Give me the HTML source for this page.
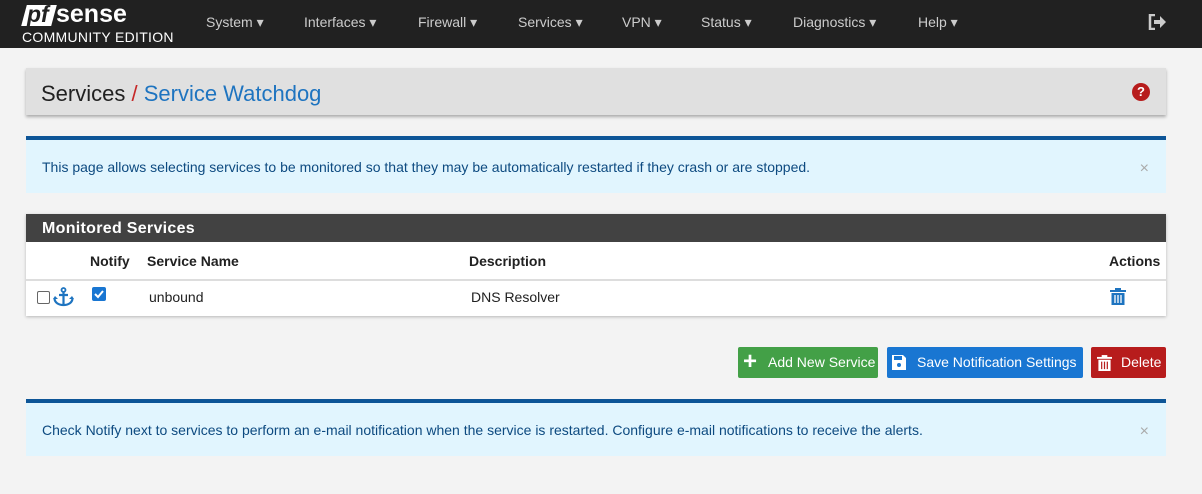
<!DOCTYPE html>
<html><head><style>
body{margin:0;width:1202px;height:494px;background:#f3f3f3;font-family:"Liberation Sans",sans-serif;font-size:14px;color:#212121;position:relative;overflow:hidden}
.nav{position:absolute;left:0;top:0;width:1202px;height:48px;background:#212121}
.nav .m{position:absolute;top:14px;color:#ccc;font-size:14px}
.abs{position:absolute}
.panel{position:absolute;left:26px;width:1140px;background:#fff;box-shadow:0 1px 3px rgba(0,0,0,.25)}
.alert{position:absolute;left:26px;width:1140px;background:#e1f5fe;border-top:4px solid #0d5597;color:#0d4a80;font-size:14px;box-sizing:border-box}
.btn{position:absolute;top:347px;height:31px;color:#fff;font-size:14px;border-radius:2px;line-height:31px;box-sizing:border-box}
</style></head><body>
<div class="nav">
 <div class="abs" style="left:24px;top:5px;width:30px;height:21px;background:#fff;transform:skewX(-15deg)"></div>
 <div class="abs" style="left:27px;top:1px;font:italic bold 23px 'Liberation Sans';color:#212121">pf</div>
 <div class="abs" style="left:56px;top:0px;font:bold 25px 'Liberation Sans';color:#fff">sense</div>
 <div class="abs" style="left:22px;top:29px;font-size:14px;color:#fff;letter-spacing:0.3px">COMMUNITY EDITION</div>
 <div class="m" style="left:206px">System ▾</div>
 <div class="m" style="left:304px">Interfaces ▾</div>
 <div class="m" style="left:418px">Firewall ▾</div>
 <div class="m" style="left:518px">Services ▾</div>
 <div class="m" style="left:622px">VPN ▾</div>
 <div class="m" style="left:701px">Status ▾</div>
 <div class="m" style="left:793px">Diagnostics ▾</div>
 <div class="m" style="left:918px">Help ▾</div>
 <svg class="abs" style="left:1148px;top:14px" width="18" height="16" viewBox="0 0 18 16"><path d="M7 1H2v14h5" stroke="#ccc" stroke-width="2.5" fill="none"/><path d="M6 6h6V2l6 6-6 6v-4H6z" fill="#ccc"/></svg>
</div>
<div class="abs" style="left:26px;top:68px;width:1140px;height:47px;background:#e0e0e0;box-shadow:0 2px 3px rgba(0,0,0,.3)">
 <div class="abs" style="left:15px;top:13px;font-size:22px;color:#212121">Services<span style="color:#c62828"> / </span> <span style="color:#1e74c0">Service Watchdog</span></div>
 <div class="abs" style="left:1106px;top:15px;width:18px;height:18px;border-radius:50%;background:#b71c1c;color:#fff;font-weight:bold;font-size:13px;text-align:center;line-height:18px">?</div>
</div>
<div class="alert" style="top:136px;height:57px;padding:19px 16px">This page allows selecting services to be monitored so that they may be automatically restarted if they crash or are stopped.<span style="position:absolute;right:17px;top:20px;color:#aaa;font-size:16px">×</span></div>
<div class="panel" style="top:214px;height:102px">
 <div class="abs" style="left:0;top:0;width:1140px;height:28px;background:#424242;color:#fff;font-weight:bold;font-size:16px;line-height:29px;padding-left:16px;box-sizing:border-box;letter-spacing:0.3px">Monitored Services</div>
 <div class="abs" style="top:39px;left:64px;font-weight:bold">Notify</div>
 <div class="abs" style="top:39px;left:121px;font-weight:bold">Service Name</div>
 <div class="abs" style="top:39px;left:443px;font-weight:bold">Description</div>
 <div class="abs" style="top:39px;left:1083px;font-weight:bold">Actions</div>
 <div class="abs" style="top:65px;left:0;width:1140px;border-top:2px solid #ddd"></div>
 <div class="abs" style="top:77px;left:11px;width:11px;height:11px;border:1px solid #666;border-radius:2px"></div>
 <svg class="abs" style="top:73px;left:27px" width="21" height="20" viewBox="0 0 21 20"><circle cx="10.5" cy="3" r="2" stroke="#1e74c0" stroke-width="1.8" fill="none"/><path d="M10.5 5v13M6 8h9" stroke="#1e74c0" stroke-width="2.2"/><path d="M1.5 11c0 5 4.5 7 9 7s9-2 9-7" stroke="#1e74c0" stroke-width="2.2" fill="none"/><path d="M0 12l2-3 3 3z M21 12l-2-3-3 3z" fill="#1e74c0"/></svg>
 <div class="abs" style="top:73px;left:66px;width:14px;height:14px;background:#1976d2;border-radius:2px"><svg width="14" height="14" viewBox="0 0 14 14"><path d="M3 7l3 3 5-6" stroke="#fff" stroke-width="2" fill="none"/></svg></div>
 <div class="abs" style="top:75px;left:123px">unbound</div>
 <div class="abs" style="top:75px;left:445px">DNS Resolver</div>
 <svg class="abs" style="top:74px;left:1084px" width="16" height="18" viewBox="0 0 16 18"><rect x="0" y="2" width="16" height="2" fill="#1e74c0"/><rect x="5" y="0" width="6" height="3" fill="#1e74c0"/><path d="M1.5 5h13v12h-13z" fill="#1e74c0"/><path d="M5 7v8M8 7v8M11 7v8" stroke="#fff" stroke-width="1.3"/></svg>
</div>
<div class="btn" style="left:738px;width:140px;background:#43a047;padding-left:30px">Add New Service<span style="position:absolute;left:5px;top:-1px;font-size:24px;font-weight:bold">+</span></div>
<div class="btn" style="left:887px;width:196px;background:#1976d2;padding-left:30px">Save Notification Settings<svg style="position:absolute;left:5px;top:8px" width="14" height="15" viewBox="0 0 14 15"><path d="M0 0h11l3 3v12H0z" fill="#fff"/><rect x="2" y="1" width="8" height="4" fill="#1976d2"/><circle cx="7" cy="10" r="2" fill="#1976d2"/></svg></div>
<div class="btn" style="left:1091px;width:75px;background:#b71c1c;padding-left:30px">Delete<svg style="position:absolute;left:6px;top:8px" width="15" height="17" viewBox="0 0 16 18"><rect x="0" y="2" width="16" height="2" fill="#fff"/><rect x="5" y="0" width="6" height="3" fill="#fff"/><path d="M1.5 5h13v12h-13z" fill="#fff"/><path d="M5 7v8M8 7v8M11 7v8" stroke="#b71c1c" stroke-width="1.3"/></svg></div>
<div class="alert" style="top:399px;height:57px;padding:19px 16px">Check Notify next to services to perform an e-mail notification when the service is restarted. Configure e-mail notifications to receive the alerts.<span style="position:absolute;right:17px;top:20px;color:#aaa;font-size:16px">×</span></div>
</body></html>
